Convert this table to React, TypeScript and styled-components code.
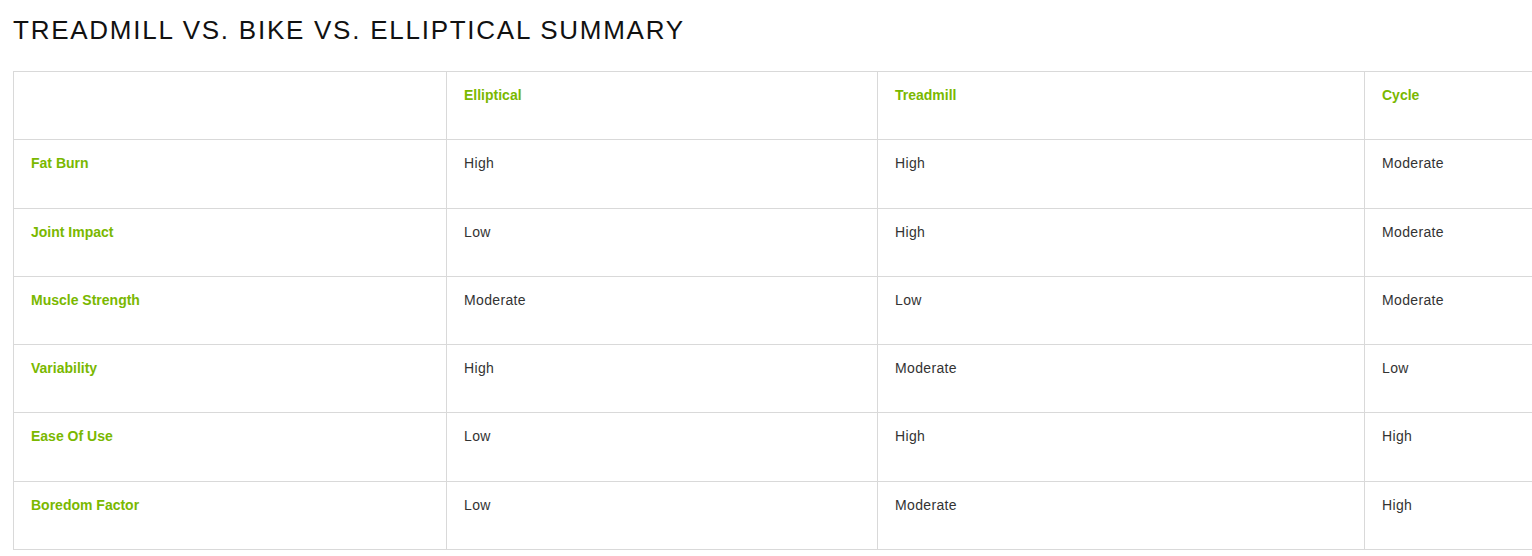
import React from "react";
import styled, { createGlobalStyle } from "styled-components";

const Global = createGlobalStyle`
  html, body { margin: 0; padding: 0; background: #fff; overflow: hidden; }
  body { font-family: "Liberation Sans", Arial, sans-serif; }
`;

const Page = styled.div`
  padding: 13px 0 0 13px;
  width: 1600px;
`;

const Title = styled.h2`
  margin: 0 0 24px 0;
  font-size: 26px;
  font-weight: 400;
  color: #111;
  line-height: 34px;
  letter-spacing: 1.75px;
`;

const Table = styled.table`
  border-collapse: collapse;
  table-layout: fixed;
  width: 1551px;
`;

const Row = styled.tr`
  height: 68.3px;
`;

const Cell = styled.td<{ $head?: boolean }>`
  border: 1px solid #d9d9d9;
  vertical-align: top;
  padding: 15px 17px;
  font-size: 14px;
  line-height: 16px;
  color: ${(p) => (p.$head ? "#7ab800" : "#333")};
  font-weight: ${(p) => (p.$head ? 700 : 400)};
  letter-spacing: ${(p) => (p.$head ? "0" : "0.35px")};
`;

const cols = [433, 431, 487, 200];
const header = ["", "Elliptical", "Treadmill", "Cycle"];
const rows: string[][] = [
  ["Fat Burn", "High", "High", "Moderate"],
  ["Joint Impact", "Low", "High", "Moderate"],
  ["Muscle Strength", "Moderate", "Low", "Moderate"],
  ["Variability", "High", "Moderate", "Low"],
  ["Ease Of Use", "Low", "High", "High"],
  ["Boredom Factor", "Low", "Moderate", "High"],
];

export default function App() {
  return (
    <Page>
      <Global />
      <Title>TREADMILL VS. BIKE VS. ELLIPTICAL SUMMARY</Title>
      <Table>
        <colgroup>
          {cols.map((w, i) => (
            <col key={i} style={{ width: w }} />
          ))}
        </colgroup>
        <tbody>
          <Row>
            {header.map((h, i) => (
              <Cell key={i} $head>
                {h}
              </Cell>
            ))}
          </Row>
          {rows.map((r, i) => (
            <Row key={i}>
              {r.map((c, j) => (
                <Cell key={j} $head={j === 0}>
                  {c}
                </Cell>
              ))}
            </Row>
          ))}
        </tbody>
      </Table>
    </Page>
  );
}
